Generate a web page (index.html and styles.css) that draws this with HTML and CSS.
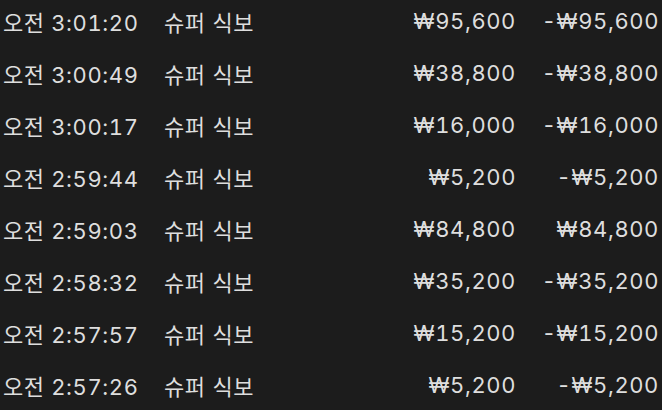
FILE: index.html
```html
<!DOCTYPE html>
<html lang="ko">
  <head>
    <meta charset="UTF-8">
    <title>주문 내역</title>
    <link rel="stylesheet" href="styles.css">
  </head>
  <body>
    <div id="list">
      <div class="row"><span class="time">오전 3:01:20</span><span class="name">슈퍼 식보</span><span class="bet">₩95,600</span><span class="win">-₩95,600</span></div>
      <div class="row"><span class="time">오전 3:00:49</span><span class="name">슈퍼 식보</span><span class="bet">₩38,800</span><span class="win">-₩38,800</span></div>
      <div class="row"><span class="time">오전 3:00:17</span><span class="name">슈퍼 식보</span><span class="bet">₩16,000</span><span class="win">-₩16,000</span></div>
      <div class="row"><span class="time">오전 2:59:44</span><span class="name">슈퍼 식보</span><span class="bet">₩5,200</span><span class="win">-₩5,200</span></div>
      <div class="row"><span class="time">오전 2:59:03</span><span class="name">슈퍼 식보</span><span class="bet">₩84,800</span><span class="win">₩84,800</span></div>
      <div class="row"><span class="time">오전 2:58:32</span><span class="name">슈퍼 식보</span><span class="bet">₩35,200</span><span class="win">-₩35,200</span></div>
      <div class="row"><span class="time">오전 2:57:57</span><span class="name">슈퍼 식보</span><span class="bet">₩15,200</span><span class="win">-₩15,200</span></div>
      <div class="row"><span class="time">오전 2:57:26</span><span class="name">슈퍼 식보</span><span class="bet">₩5,200</span><span class="win">-₩5,200</span></div>
    </div>
  </body>
</html>
```

FILE: styles.css
```css
html,
body {
  margin: 0;
  background: #1c1c1c;
  overflow: hidden;
}

#list {
  margin-top: -5px;
  padding: 0 3px 0 3px;
  color: #dedede;
  font-family: Inter, "Noto Sans CJK KR", sans-serif;
  font-size: 22px;
  letter-spacing: 0.6px;
}

.row {
  display: grid;
  grid-template-columns: 161px 180px 172px 1fr;
  align-items: center;
  height: 52px;
  white-space: nowrap;
}

.time,
.bet,
.win {
  font-variant-numeric: tabular-nums;
}

.bet,
.win {
  text-align: right;
}
```
